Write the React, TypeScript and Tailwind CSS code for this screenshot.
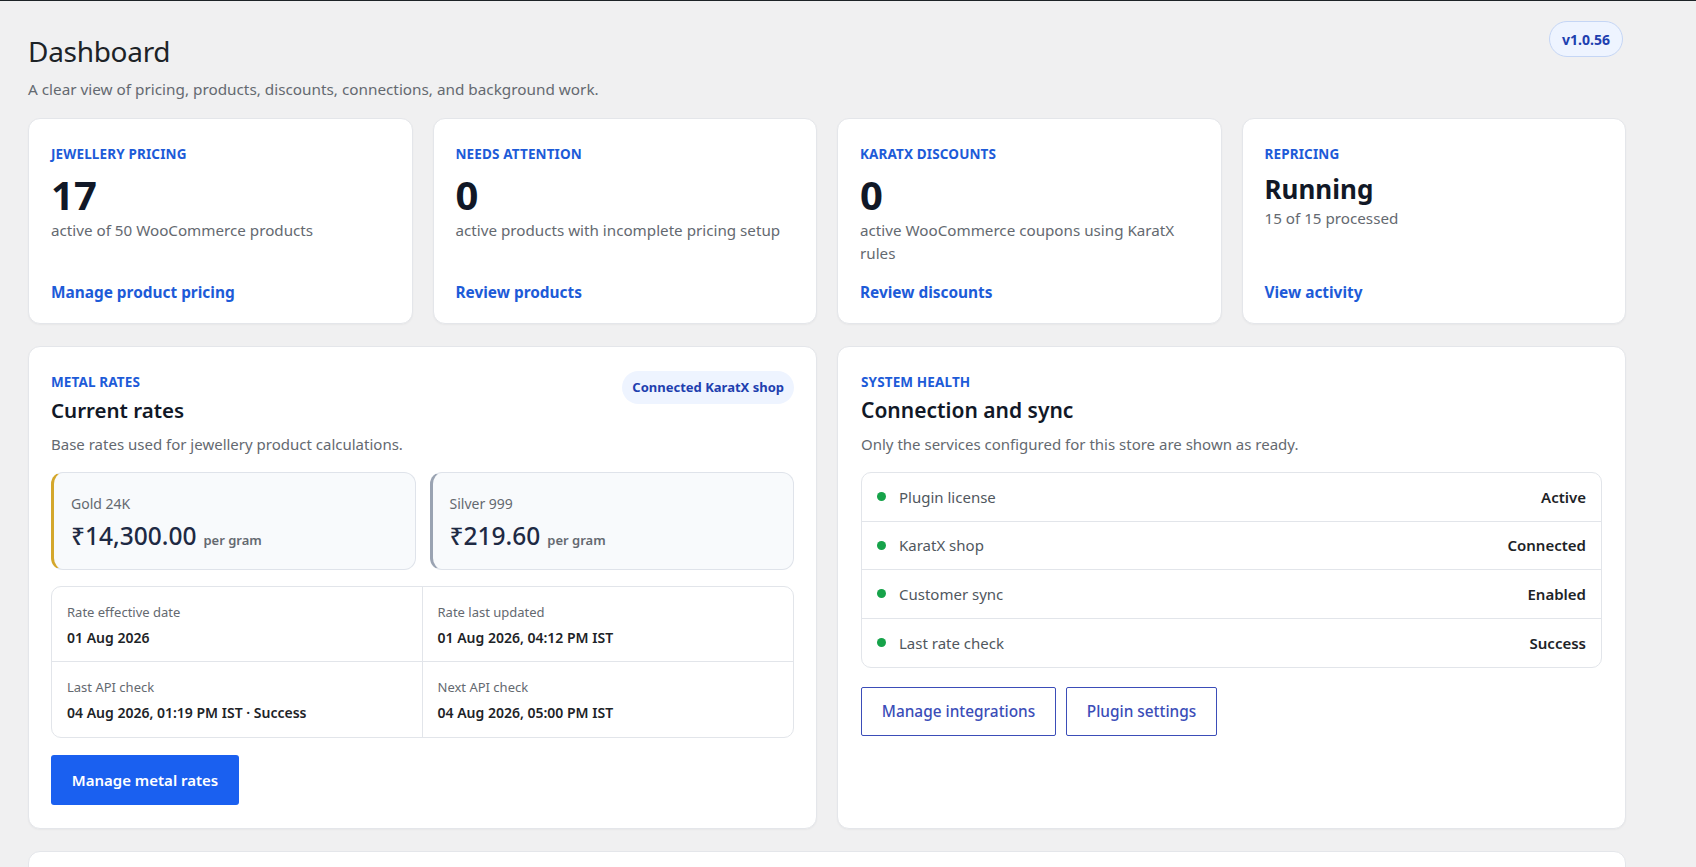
import React from "react";

type Stat = {
  label: string;
  value: string;
  desc: string;
  link: string;
  small?: boolean;
};

const STATS: Stat[] = [
  { label: "Jewellery pricing", value: "17", desc: "active of 50 WooCommerce products", link: "Manage product pricing" },
  { label: "Needs attention", value: "0", desc: "active products with incomplete pricing setup", link: "Review products" },
  { label: "KaratX discounts", value: "0", desc: "active WooCommerce coupons using KaratX rules", link: "Review discounts" },
  { label: "Repricing", value: "Running", desc: "15 of 15 processed", link: "View activity", small: true },
];

const RATE_INFO = [
  { label: "Rate effective date", value: "01 Aug 2026" },
  { label: "Rate last updated", value: "01 Aug 2026, 04:12 PM IST" },
  { label: "Last API check", value: "04 Aug 2026, 01:19 PM IST · Success" },
  { label: "Next API check", value: "04 Aug 2026, 05:00 PM IST" },
];

const HEALTH = [
  { label: "Plugin license", value: "Active" },
  { label: "KaratX shop", value: "Connected" },
  { label: "Customer sync", value: "Enabled" },
  { label: "Last rate check", value: "Success" },
];

function Eyebrow({ children }: { children: React.ReactNode }) {
  return (
    <p className="text-[13.5px] leading-[18px] font-bold uppercase tracking-[0.01em] text-[#1d5bd8]">{children}</p>
  );
}

function StatCard({ stat }: { stat: Stat }) {
  return (
    <div className="bg-white rounded-xl border border-[#e4e6ea] shadow-[0_1px_2px_rgba(0,0,0,0.04)] h-[206px] px-[22px] pt-[26px] pb-[19px] flex flex-col">
      <Eyebrow>{stat.label}</Eyebrow>
      {stat.small ? (
        <p className="mt-[10px] text-[26px] leading-[32px] font-bold text-[#111827]">{stat.value}</p>
      ) : (
        <p className="mt-[10px] text-[40px] leading-[44px] font-bold text-[#111827]">{stat.value}</p>
      )}
      <p className="mt-[2px] text-[15.2px] leading-[23px] text-[#646970]">{stat.desc}</p>
      <a className="mt-auto text-[15.4px] leading-[22px] font-bold text-[#1d5bd8]">{stat.link}</a>
    </div>
  );
}

function RateBox({ name, price, gold }: { name: string; price: string; gold?: boolean }) {
  return (
    <div
      className={`h-[98px] rounded-xl border border-[#dfe3ea] border-l-[3px] bg-[#f8fafc] pl-[17px] pt-[21px] ${
        gold ? "border-l-[#d4a72c]" : "border-l-[#9aa3b2]"
      }`}
    >
      <p className="text-[14px] leading-[20px] text-[#646970]">{name}</p>
      <p className="mt-[6px] flex items-baseline gap-[7px] text-[#1e2a44]">
        <span className="text-[24.5px] leading-[32px] font-medium">{price}</span>
        <span className="text-[13px] font-semibold text-[#646970]">per gram</span>
      </p>
    </div>
  );
}

export default function App() {
  return (
    <div className="min-h-screen bg-[#f0f0f1] border-t border-[#1d2327] font-['Noto_Sans','Open_Sans',sans-serif] overflow-hidden">
      <div className="pl-[28px] pr-[70px] pt-[20px]">
        {/* Header */}
        <div className="flex items-start justify-between">
          <div className="pt-[10px]">
            <h1 className="text-[28px] leading-[40px] font-normal tracking-[-0.3px] text-[#1d2327]">Dashboard</h1>
            <p className="mt-[8px] text-[15.3px] leading-[20px] text-[#646970]">
              A clear view of pricing, products, discounts, connections, and background work.
            </p>
          </div>
          <div className="mr-[3px] h-[36px] px-[12px] flex items-center rounded-full border border-[#c5d6f5] bg-[#eef4ff] text-[14px] font-bold text-[#1e40af]">
            v1.0.56
          </div>
        </div>

        {/* Stat cards */}
        <div className="mt-[19px] grid grid-cols-4 gap-x-[20px]">
          {STATS.map(s => (
            <StatCard key={s.label} stat={s} />
          ))}
        </div>

        {/* Panels */}
        <div className="mt-[22px] grid grid-cols-2 gap-x-[20px]">
          {/* Metal rates */}
          <div className="bg-white rounded-xl border border-[#e4e6ea] shadow-[0_1px_2px_rgba(0,0,0,0.04)] px-[22px] pt-[26px] pb-[23px]">
            <div className="flex items-start justify-between">
              <div>
                <Eyebrow>Metal rates</Eyebrow>
                <h2 className="mt-[4px] text-[20.5px] leading-[30px] font-semibold text-[#111827]">Current rates</h2>
                <p className="mt-[8px] text-[15px] leading-[22px] text-[#646970]">
                  Base rates used for jewellery product calculations.
                </p>
              </div>
              <span className="-mt-[2px] h-[33px] px-[10px] flex items-center rounded-full bg-[#eef4ff] text-[13px] font-bold text-[#1e40af]">
                Connected KaratX shop
              </span>
            </div>

            <div className="mt-[17px] grid grid-cols-2 gap-[14px]">
              <RateBox name="Gold 24K" price="₹14,300.00" gold />
              <RateBox name="Silver 999" price="₹219.60" />
            </div>

            <div className="mt-[16px] grid grid-cols-2 rounded-[10px] border border-[#e2e5ea] overflow-hidden">
              {RATE_INFO.map((r, i) => (
                <div
                  key={r.label}
                  className={`h-[75px] px-[15px] pt-[16px] ${i % 2 === 0 ? "border-r border-[#e2e5ea]" : ""} ${
                    i < 2 ? "border-b border-[#e2e5ea]" : ""
                  }`}
                >
                  <p className="text-[13px] leading-[18px] text-[#646970]">{r.label}</p>
                  <p className="mt-[7px] text-[14px] leading-[20px] font-semibold text-[#1d2327]">{r.value}</p>
                </div>
              ))}
            </div>

            <button className="mt-[17px] h-[50px] w-[188px] rounded-[3px] bg-[#1a60f0] text-[15px] font-semibold text-white">
              Manage metal rates
            </button>
          </div>

          {/* System health */}
          <div className="bg-white rounded-xl border border-[#e4e6ea] shadow-[0_1px_2px_rgba(0,0,0,0.04)] px-[23px] pt-[26px] pb-[23px]">
            <Eyebrow>System health</Eyebrow>
            <h2 className="mt-[4px] text-[21px] leading-[30px] font-semibold text-[#111827]">Connection and sync</h2>
            <p className="mt-[8px] text-[15px] leading-[22px] text-[#646970]">
              Only the services configured for this store are shown as ready.
            </p>

            <div className="mt-[17px] rounded-[10px] border border-[#e2e5ea] divide-y divide-[#e2e5ea]">
              {HEALTH.map(h => (
                <div key={h.label} className="h-[48.5px] px-[15px] flex items-center justify-between">
                  <div className="flex items-center gap-[13px]">
                    <span className="w-[9px] h-[9px] rounded-full bg-[#16a34a]" />
                    <span className="text-[15px] text-[#50575e]">{h.label}</span>
                  </div>
                  <span className="text-[15px] font-semibold text-[#1d2327]">{h.value}</span>
                </div>
              ))}
            </div>

            <div className="mt-[19px] flex gap-[10px]">
              <button className="h-[49px] w-[195px] rounded-[2px] border border-[#3b4db8] text-[15.4px] font-medium text-[#3b4db8]">
                Manage integrations
              </button>
              <button className="h-[49px] w-[151px] rounded-[2px] border border-[#3b4db8] text-[15.4px] font-medium text-[#3b4db8]">
                Plugin settings
              </button>
            </div>
          </div>
        </div>

        {/* Next section */}
        <div className="mt-[22px] h-[200px] bg-white rounded-xl border border-[#e4e6ea]" />
      </div>
    </div>
  );
}
